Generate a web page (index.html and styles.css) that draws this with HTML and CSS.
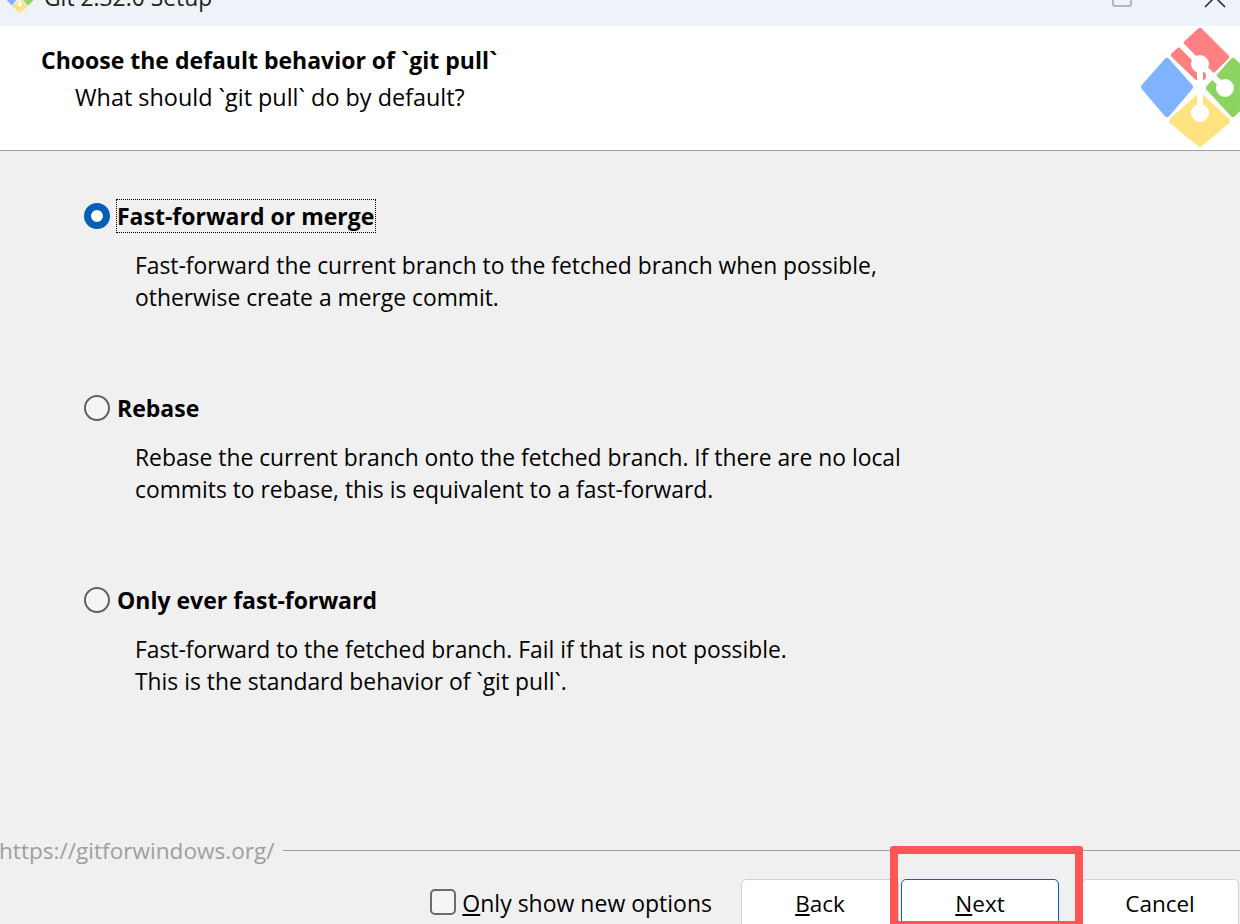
FILE: index.html
```html
<!DOCTYPE html>
<html lang="en">
<head>
    <meta charset="UTF-8">
    <title>Git 2.32.0 Setup</title>
    <link rel="stylesheet" href="styles.css">
</head>
<body>
    <svg class="defs" width="0" height="0">
        <symbol id="git-logo" viewBox="1140 27 121 121">
            <polygon class="logo-red" points="1200,31 1226,57 1213,70 1187,43" />
            <polygon class="logo-red" points="1180,50 1174,55 1197,77 1203,77 1203,73" />
            <polygon class="logo-blue" points="1167,61 1190,87 1167,114 1144,87" />
            <polygon class="logo-green" points="1233,61 1260,87 1233,114 1209,88" />
            <polygon class="logo-yellow" points="1200,96 1227,121 1200,144 1172,121" />
            <line class="logo-line" x1="1200" y1="64" x2="1200" y2="113" />
            <line class="logo-line" x1="1200" y1="64" x2="1225" y2="88" />
            <line class="logo-line" x1="1178" y1="42" x2="1200" y2="64" />
            <circle class="logo-dot" cx="1200" cy="64" r="9" />
            <circle class="logo-dot" cx="1225" cy="88" r="9" />
            <circle class="logo-dot" cx="1200" cy="113" r="9" />
        </symbol>
    </svg>

    <div class="titlebar">
        <svg class="title-icon"><use href="#git-logo" /></svg>
        <span class="title-text">Git 2.32.0 Setup</span>
        <span class="win-max"></span>
        <svg class="win-close" width="22" height="8" viewBox="0 0 22 8">
            <path d="M1 7 L8 0 M21 7 L14 0 M8 0 L11 -3 M14 0 L11 -3" />
        </svg>
    </div>

    <header class="page-head">
        <div class="head-text">
            <h1>Choose the default behavior of `git pull`</h1>
            <p>What should `git pull` do by default?</p>
        </div>
        <svg class="head-logo"><use href="#git-logo" /></svg>
    </header>

    <main class="options">
        <div class="option">
            <div class="option-row">
                <span class="radio checked"></span>
                <span class="option-label focused">Fast-forward or merge</span>
            </div>
            <p>Fast-forward the current branch to the fetched branch when possible,<br>otherwise create a merge commit.</p>
        </div>
        <div class="option">
            <div class="option-row">
                <span class="radio"></span>
                <span class="option-label">Rebase</span>
            </div>
            <p>Rebase the current branch onto the fetched branch. If there are no local<br>commits to rebase, this is equivalent to a fast-forward.</p>
        </div>
        <div class="option">
            <div class="option-row">
                <span class="radio"></span>
                <span class="option-label">Only ever fast-forward</span>
            </div>
            <p>Fast-forward to the fetched branch. Fail if that is not possible.<br>This is the standard behavior of `git pull`.</p>
        </div>
    </main>

    <footer class="page-foot">
        <div class="brand">
            <span class="brand-link">https://gitforwindows.org/</span>
            <span class="brand-rule"></span>
        </div>
        <div class="actions">
            <label class="check-wrap">
                <span class="checkbox"></span>
                <span><u>O</u>nly show new options</span>
            </label>
            <button class="btn btn-back"><u>B</u>ack</button>
            <button class="btn btn-next"><u>N</u>ext</button>
            <button class="btn btn-cancel">Cancel</button>
        </div>
    </footer>

    <div class="highlight"></div>
</body>
</html>
```

FILE: styles.css
```css
html, body {
    margin: 0;
    padding: 0;
    height: 924px;
    overflow: hidden;
}

body {
    position: relative;
    display: flex;
    flex-direction: column;
    background-color: #f0f0f0;
    color: #000;
    font-family: "Open Sans", "Noto Sans", sans-serif;
    font-size: 22.85px;
}

.defs {
    position: absolute;
}

.logo-red { fill: #ff8080; stroke: #ff8080; stroke-width: 6; stroke-linejoin: round; }
.logo-blue { fill: #80b3ff; stroke: #80b3ff; stroke-width: 6; stroke-linejoin: round; }
.logo-green { fill: #8cd362; stroke: #8cd362; stroke-width: 6; stroke-linejoin: round; }
.logo-yellow { fill: #ffe380; stroke: #ffe380; stroke-width: 6; stroke-linejoin: round; }
.logo-line { stroke: #fff; stroke-width: 6; }
.logo-dot { fill: #fff; }

/* title bar, cut off at the top of the shot */
.titlebar {
    display: flex;
    align-items: flex-start;
    flex: 0 0 26px;
    height: 26px;
    overflow: hidden;
    background-color: #eef2f9;
    padding-left: 5px;
}

.title-icon {
    width: 30px;
    height: 30px;
    margin-top: -17px;
    flex-shrink: 0;
}

.title-text {
    margin-left: 9px;
    margin-top: -22px;
    line-height: 40px;
    color: #222;
}

.win-max {
    box-sizing: border-box;
    width: 20px;
    height: 16px;
    margin-left: auto;
    margin-top: -9px;
    border: 2px solid #b5b5b5;
    border-radius: 3px;
}

.win-close {
    margin-left: 72px;
    margin-right: 14px;
    overflow: visible;
}

.win-close path {
    stroke: #222;
    stroke-width: 1.5;
    fill: none;
}

/* white header */
.page-head {
    display: flex;
    justify-content: space-between;
    flex: 0 0 124px;
    height: 124px;
    overflow: hidden;
    background-color: #fff;
    border-bottom: 1px solid #a0a0a0;
}

.head-text {
    padding: 17px 0 0 41px;
}

.page-head h1 {
    margin: 0;
    font-size: 23px;
    font-weight: 700;
    line-height: 34px;
}

.page-head p {
    margin: 3px 0 0 34px;
    font-size: 23.4px;
    line-height: 34px;
}

.head-logo {
    width: 121px;
    height: 121px;
    margin-top: 1px;
    margin-right: -21px;
    flex-shrink: 0;
}

/* radio options */
.options {
    flex: 1;
    padding: 47px 0 0 84px;
}

.option {
    height: 192px;
}

.option-row {
    display: flex;
    align-items: center;
    height: 36px;
}

.radio {
    box-sizing: border-box;
    width: 26px;
    height: 26px;
    border: 2px solid #606060;
    border-radius: 50%;
    background-color: #f5f5f5;
}

.radio.checked {
    border: 7px solid #0060b8;
    background-color: #fff;
}

.option-label {
    box-sizing: border-box;
    margin-left: 6px;
    padding: 0 1px 0 0;
    height: 34px;
    line-height: 32px;
    font-size: 23px;
    font-weight: 700;
    border: 1px solid transparent;
}

.option-label.focused {
    border: 1px dotted #000;
}

.option p {
    margin: 16px 0 0 51px;
    line-height: 32px;
}

/* footer */
.page-foot {
    flex: 0 0 92px;
    height: 92px;
    overflow: hidden;
}

.brand {
    display: flex;
    align-items: center;
    height: 34px;
    margin-top: 1px;
}

.brand-link {
    margin-left: -1px;
    font-size: 22.6px;
    color: #9f9f9f;
    white-space: nowrap;
}

.brand-rule {
    flex: 1;
    height: 1px;
    margin-left: 8px;
    background-color: #a0a0a0;
}

.actions {
    display: flex;
    align-items: flex-start;
    justify-content: flex-end;
    margin-top: 12px;
    padding-right: 1px;
}

.check-wrap {
    display: flex;
    align-items: center;
    height: 48px;
    margin-right: 29px;
    font-size: 23px;
}

.checkbox {
    box-sizing: border-box;
    width: 26px;
    height: 26px;
    margin-right: 6px;
    margin-bottom: 2px;
    border: 2px solid #6b6b6b;
    border-radius: 5px;
    background-color: #f5f5f5;
}

.btn {
    box-sizing: border-box;
    width: 158px;
    height: 60px;
    padding: 0 0 12px;
    border: 1px solid #d0d0d0;
    border-radius: 5px;
    background-color: #fff;
    color: #000;
    font-family: inherit;
    font-size: 22.5px;
}

.btn-next {
    margin-left: 2px;
    border-color: #0067c0;
}

.btn-cancel {
    margin-left: 22px;
}

/* red annotation drawn over the Next button */
.highlight {
    position: absolute;
    left: 890px;
    top: 846px;
    box-sizing: border-box;
    width: 193px;
    height: 83px;
    border: 8px solid #ff5555;
    border-radius: 3px;
}
```
